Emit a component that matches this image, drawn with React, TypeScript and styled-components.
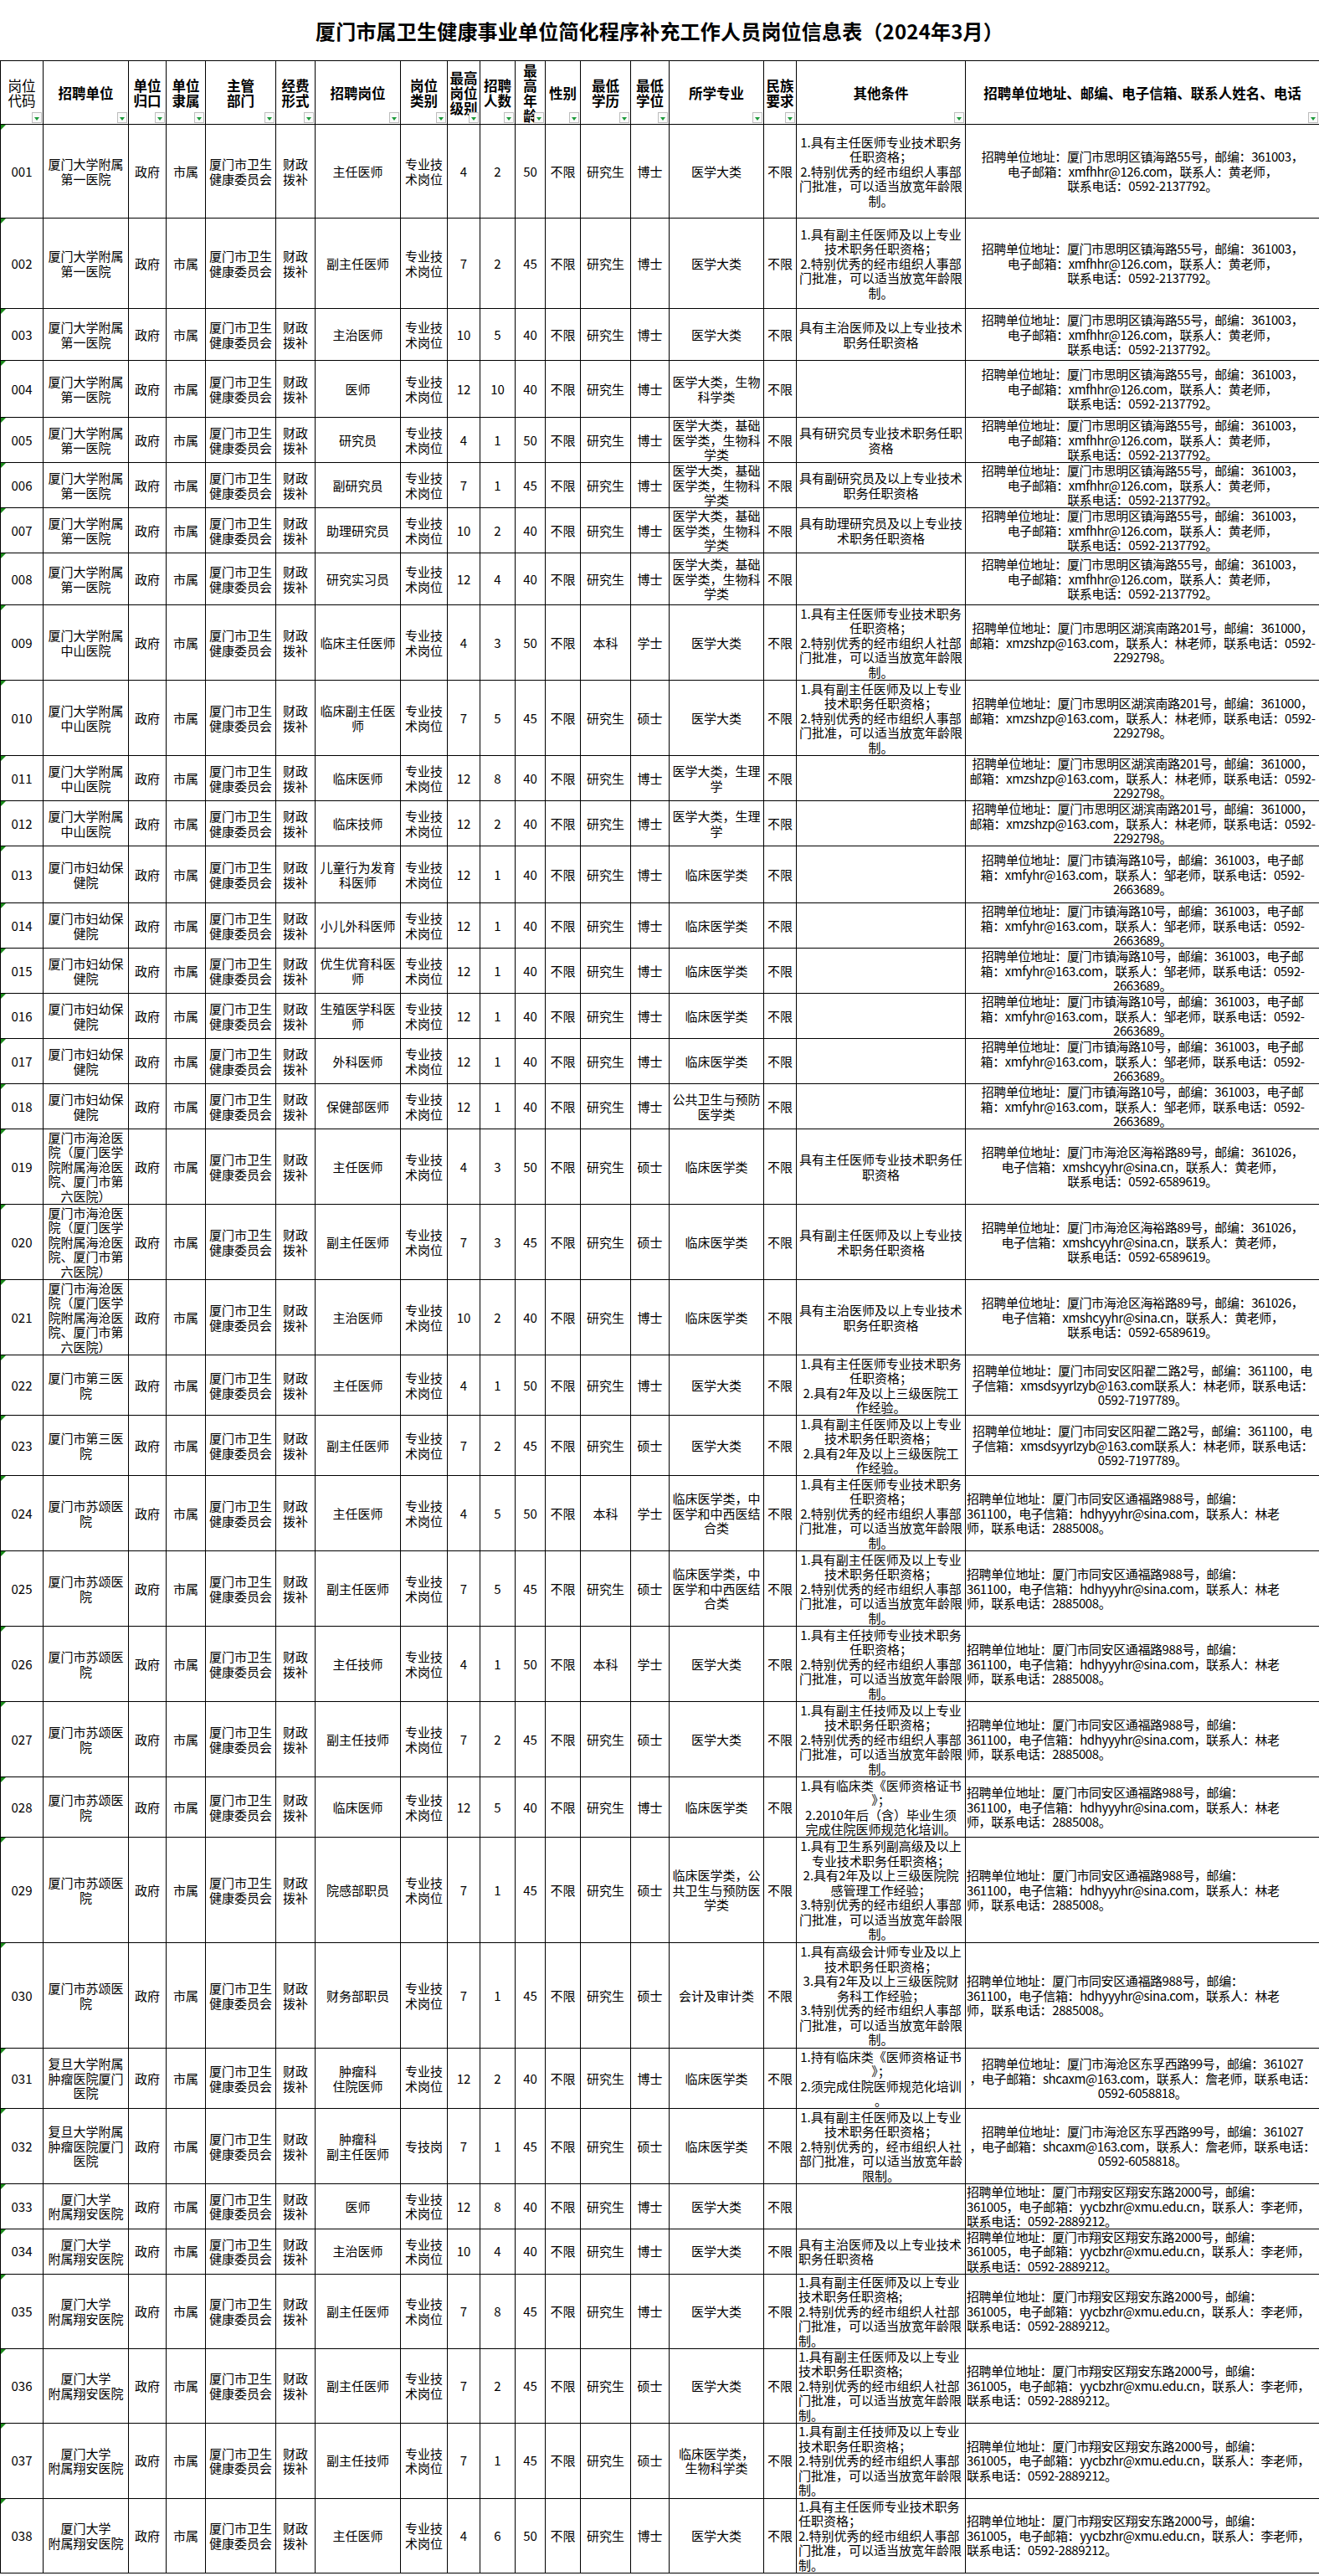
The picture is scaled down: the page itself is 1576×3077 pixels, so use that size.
import React from 'react';
import styled, { createGlobalStyle } from 'styled-components';

const GlobalStyle = createGlobalStyle`
  html, body {
    margin: 0;
    padding: 0;
    background: #fff;
  }
  body {
    font-family: "Noto Sans CJK SC", "Liberation Sans", sans-serif;
    color: #000;
  }
`;

const Page = styled.div`
  width: 1576px;
  min-height: 3077px;
  background: #fff;
`;

const Title = styled.h1`
  margin: 0;
  height: 72px;
  display: flex;
  align-items: center;
  justify-content: center;
  font-size: 24px;
  font-weight: 700;
  letter-spacing: 0.2px;
`;

const Sheet = styled.table`
  table-layout: fixed;
  border-collapse: collapse;
  width: 1576px;
`;

const Row = styled.tr<{ $h: number }>`
  height: ${({ $h }) => $h}px;
`;

const HeadCell = styled.th<{ $plain?: boolean }>`
  position: relative;
  border: 1px solid #000;
  padding: 0 1px;
  font-size: 16.5px;
  font-weight: ${({ $plain }) => ($plain ? 400 : 700)};
  line-height: 18px;
  white-space: pre-line;
  text-align: center;
  vertical-align: middle;
`;

const FilterBtn = styled.span`
  position: absolute;
  right: 1px;
  bottom: 1px;
  width: 12px;
  height: 13px;
  box-sizing: border-box;
  border: 1px solid #bdbdbd;
  background: #fafafa;
  &::after {
    content: '';
    position: absolute;
    left: 2px;
    top: 5px;
    border-left: 3px solid transparent;
    border-right: 3px solid transparent;
    border-top: 4px solid #1c9a3a;
  }
`;

const Cell = styled.td<{ $left?: boolean; $pre?: boolean }>`
  border: 1px solid #000;
  padding: 0 2px;
  font-size: 15px;
  line-height: 17.5px;
  text-align: ${({ $left }) => ($left ? 'left' : 'center')};
  vertical-align: middle;
  white-space: ${({ $pre }) => ($pre ? 'pre' : 'pre-line')};
  line-break: anywhere;
  overflow-wrap: anywhere;
`;

// the sheet's original font has narrower latin glyphs, so tighten the long address lines
const AddrCell = styled(Cell)`
  padding: 0 1px;
  letter-spacing: -0.4px;
`;

const CodeCell = styled(Cell)`
  position: relative;
  &::before {
    content: '';
    position: absolute;
    left: 0;
    top: 0;
    border-top: 6px solid #1a8a1a;
    border-right: 6px solid transparent;
  }
`;

const widths = [51, 102, 45, 47, 84, 47, 102, 56, 39, 42, 36, 42, 60, 46, 113, 39, 202, 423];

const headers = [
  '岗位\n代码', '招聘单位', '单位\n归口', '单位\n隶属', '主管\n部门', '经费\n形式', '招聘岗位', '岗位\n类别',
  '最高\n岗位\n级别', '招聘\n人数', '最\n高\n年\n龄', '性别', '最低\n学历', '最低\n学位', '所学专业', '民族\n要求',
  '其他条件', '招聘单位地址、邮编、电子信箱、联系人姓名、电话',
];

const C_ZR = '1.具有主任医师专业技术职务\n任职资格；\n2.特别优秀的经市组织人事部\n门批准，可以适当放宽年龄限\n制。';
const C_FZR = '1.具有副主任医师及以上专业\n技术职务任职资格；\n2.特别优秀的经市组织人事部\n门批准，可以适当放宽年龄限\n制。';
const C_ZZ = '具有主治医师及以上专业技术\n职务任职资格';
const C_XA_FZR = '1.具有副主任医师及以上专业\n技术职务任职资格;\n2.特别优秀的经市组织人社部\n门批准，可以适当放宽年龄限\n制。';

type Hospital = { unit: string; addr: string; left?: boolean };

const H1: Hospital = {
  unit: '厦门大学附属第一医院',
  addr: '招聘单位地址：厦门市思明区镇海路55号，邮编：361003，\n电子邮箱：xmfhhr@126.com，联系人：黄老师，\n联系电话：0592-2137792。',
};
const H2: Hospital = {
  unit: '厦门大学附属中山医院',
  addr: '招聘单位地址：厦门市思明区湖滨南路201号，邮编：361000，\n邮箱：xmzshzp@163.com，联系人：林老师，联系电话：0592-\n2292798。',
};
const H3: Hospital = {
  unit: '厦门市妇幼保健院',
  addr: '招聘单位地址：厦门市镇海路10号，邮编：361003，电子邮\n箱：xmfyhr@163.com，联系人：邹老师，联系电话：0592-\n2663689。',
};
const H4: Hospital = {
  unit: '厦门市海沧医院（厦门医学院附属海沧医院、厦门市第六医院）',
  addr: '招聘单位地址：厦门市海沧区海裕路89号，邮编：361026，\n电子信箱：xmshcyyhr@sina.cn，联系人：黄老师，\n联系电话：0592-6589619。',
};
const H5: Hospital = {
  unit: '厦门市第三医院',
  addr: '招聘单位地址：厦门市同安区阳翟二路2号，邮编：361100，电\n子信箱：xmsdsyyrlzyb@163.com联系人：林老师，联系电话：\n0592-7197789。',
};
const H6: Hospital = {
  unit: '厦门市苏颂医院',
  addr: '招聘单位地址：厦门市同安区通福路988号，邮编：\n361100，电子信箱：hdhyyyhr@sina.com，联系人：林老\n师，联系电话：2885008。',
  left: true,
};
const H7: Hospital = {
  unit: '复旦大学附属肿瘤医院厦门医院',
  addr: '招聘单位地址：厦门市海沧区东孚西路99号，邮编：361027\n，电子邮箱：shcaxm@163.com，联系人：詹老师，联系电话：\n0592-6058818。',
};
const H8: Hospital = {
  unit: '厦门大学\n附属翔安医院',
  addr: '招聘单位地址：厦门市翔安区翔安东路2000号，邮编：\n361005，电子邮箱：yycbzhr@xmu.edu.cn，联系人：李老师，\n联系电话：0592-2889212。',
  left: true,
};

type Post = {
  code: string;
  h: number;
  hos: Hospital;
  post: string;
  type?: string;
  level: number;
  num: number;
  age: number;
  edu: string;
  degree: string;
  major: string;
  cond: string;
  condLeft?: boolean;
};

const p = (
  code: string, h: number, hos: Hospital, post: string, level: number, num: number, age: number,
  edu: string, degree: string, major: string, cond = '', extra: Partial<Post> = {},
): Post => ({ code, h, hos, post, level, num, age, edu, degree, major, cond, ...extra });

const M5 = '医学大类，基础医学类，生物科学类';

const posts: Post[] = [
  p('001', 112, H1, '主任医师', 4, 2, 50, '研究生', '博士', '医学大类', C_ZR),
  p('002', 108, H1, '副主任医师', 7, 2, 45, '研究生', '博士', '医学大类', C_FZR),
  p('003', 62, H1, '主治医师', 10, 5, 40, '研究生', '博士', '医学大类', C_ZZ),
  p('004', 68, H1, '医师', 12, 10, 40, '研究生', '博士', '医学大类，生物科学类'),
  p('005', 54, H1, '研究员', 4, 1, 50, '研究生', '博士', M5, '具有研究员专业技术职务任职\n资格'),
  p('006', 54, H1, '副研究员', 7, 1, 45, '研究生', '博士', M5, '具有副研究员及以上专业技术\n职务任职资格'),
  p('007', 54, H1, '助理研究员', 10, 2, 40, '研究生', '博士', M5, '具有助理研究员及以上专业技\n术职务任职资格'),
  p('008', 62, H1, '研究实习员', 12, 4, 40, '研究生', '博士', M5),
  p('009', 90, H2, '临床主任医师', 4, 3, 50, '本科', '学士', '医学大类',
    '1.具有主任医师专业技术职务\n任职资格；\n2.特别优秀的经市组织人社部\n门批准，可以适当放宽年龄限\n制。'),
  p('010', 90, H2, '临床副主任医师', 7, 5, 45, '研究生', '硕士', '医学大类', C_FZR),
  p('011', 54, H2, '临床医师', 12, 8, 40, '研究生', '博士', '医学大类，生理学'),
  p('012', 54, H2, '临床技师', 12, 2, 40, '研究生', '博士', '医学大类，生理学'),
  p('013', 68, H3, '儿童行为发育科医师', 12, 1, 40, '研究生', '博士', '临床医学类'),
  p('014', 54, H3, '小儿外科医师', 12, 1, 40, '研究生', '博士', '临床医学类'),
  p('015', 54, H3, '优生优育科医师', 12, 1, 40, '研究生', '博士', '临床医学类'),
  p('016', 54, H3, '生殖医学科医师', 12, 1, 40, '研究生', '博士', '临床医学类'),
  p('017', 54, H3, '外科医师', 12, 1, 40, '研究生', '博士', '临床医学类'),
  p('018', 54, H3, '保健部医师', 12, 1, 40, '研究生', '博士', '公共卫生与预防医学类'),
  p('019', 90, H4, '主任医师', 4, 3, 50, '研究生', '硕士', '临床医学类', '具有主任医师专业技术职务任\n职资格'),
  p('020', 90, H4, '副主任医师', 7, 3, 45, '研究生', '硕士', '临床医学类', '具有副主任医师及以上专业技\n术职务任职资格'),
  p('021', 90, H4, '主治医师', 10, 2, 40, '研究生', '博士', '临床医学类', C_ZZ),
  p('022', 72, H5, '主任医师', 4, 1, 50, '研究生', '博士', '医学大类',
    '1.具有主任医师专业技术职务\n任职资格；\n2.具有2年及以上三级医院工\n作经验。'),
  p('023', 72, H5, '副主任医师', 7, 2, 45, '研究生', '硕士', '医学大类',
    '1.具有副主任医师及以上专业\n技术职务任职资格；\n2.具有2年及以上三级医院工\n作经验。'),
  p('024', 90, H6, '主任医师', 4, 5, 50, '本科', '学士', '临床医学类，中医学和中西医结合类', C_ZR),
  p('025', 90, H6, '副主任医师', 7, 5, 45, '研究生', '硕士', '临床医学类，中医学和中西医结合类', C_FZR),
  p('026', 90, H6, '主任技师', 4, 1, 50, '本科', '学士', '医学大类',
    '1.具有主任技师专业技术职务\n任职资格；\n2.特别优秀的经市组织人事部\n门批准，可以适当放宽年龄限\n制。'),
  p('027', 90, H6, '副主任技师', 7, 2, 45, '研究生', '硕士', '医学大类',
    '1.具有副主任技师及以上专业\n技术职务任职资格；\n2.特别优秀的经市组织人事部\n门批准，可以适当放宽年龄限\n制。'),
  p('028', 72, H6, '临床医师', 12, 5, 40, '研究生', '博士', '临床医学类',
    '1.具有临床类《医师资格证书\n》；\n2.2010年后（含）毕业生须\n完成住院医师规范化培训。'),
  p('029', 126, H6, '院感部职员', 7, 1, 45, '研究生', '硕士', '临床医学类，公共卫生与预防医学类',
    '1.具有卫生系列副高级及以上\n专业技术职务任职资格；\n2.具有2年及以上三级医院院\n感管理工作经验；\n3.特别优秀的经市组织人事部\n门批准，可以适当放宽年龄限\n制。'),
  p('030', 126, H6, '财务部职员', 7, 1, 45, '研究生', '硕士', '会计及审计类',
    '1.具有高级会计师专业及以上\n技术职务任职资格；\n3.具有2年及以上三级医院财\n务科工作经验；\n3.特别优秀的经市组织人事部\n门批准，可以适当放宽年龄限\n制。'),
  p('031', 72, H7, '肿瘤科\n住院医师', 12, 2, 40, '研究生', '博士', '临床医学类',
    '1.持有临床类《医师资格证书\n》；\n2.须完成住院医师规范化培训\n。'),
  p('032', 90, H7, '肿瘤科\n副主任医师', 7, 1, 45, '研究生', '硕士', '临床医学类',
    '1.具有副主任医师及以上专业\n技术职务任职资格；\n2.特别优秀的，经市组织人社\n部门批准，可以适当放宽年龄\n限制。', { type: '专技岗' }),
  p('033', 53, H8, '医师', 12, 8, 40, '研究生', '博士', '医学大类'),
  p('034', 54, H8, '主治医师', 10, 4, 40, '研究生', '博士', '医学大类', C_ZZ, { condLeft: true }),
  p('035', 89, H8, '副主任医师', 7, 8, 45, '研究生', '博士', '医学大类', C_XA_FZR, { condLeft: true }),
  p('036', 89, H8, '副主任医师', 7, 2, 45, '研究生', '硕士', '医学大类', C_XA_FZR, { condLeft: true }),
  p('037', 90, H8, '副主任技师', 7, 1, 45, '研究生', '硕士', '临床医学类，\n生物科学类',
    '1.具有副主任技师及以上专业\n技术职务任职资格；\n2.特别优秀的经市组织人事部\n门批准，可以适当放宽年龄限\n制。', { condLeft: true }),
  p('038', 89, H8, '主任医师', 4, 6, 50, '研究生', '博士', '医学大类',
    '1.具有主任医师专业技术职务\n任职资格；\n2.特别优秀的经市组织人事部\n门批准，可以适当放宽年龄限\n制。', { condLeft: true }),
];

const PostRow = ({ item }: { item: Post }) => (
  <Row $h={item.h}>
    <CodeCell>{item.code}</CodeCell>
    <Cell>{item.hos.unit}</Cell>
    <Cell>政府</Cell>
    <Cell>市属</Cell>
    <Cell>厦门市卫生健康委员会</Cell>
    <Cell>财政拨补</Cell>
    <Cell>{item.post}</Cell>
    <Cell>{item.type ?? '专业技术岗位'}</Cell>
    <Cell>{item.level}</Cell>
    <Cell>{item.num}</Cell>
    <Cell>{item.age}</Cell>
    <Cell>不限</Cell>
    <Cell>{item.edu}</Cell>
    <Cell>{item.degree}</Cell>
    <Cell>{item.major}</Cell>
    <Cell>不限</Cell>
    <Cell $pre $left={item.condLeft}>{item.cond}</Cell>
    <AddrCell $pre $left={item.hos.left}>{item.hos.addr}</AddrCell>
  </Row>
);

const App = () => {
  return (
    <Page>
      <GlobalStyle />
      <Title>厦门市属卫生健康事业单位简化程序补充工作人员岗位信息表（2024年3月）</Title>
      <Sheet>
        <colgroup>
          {widths.map((w, i) => (
            <col key={i} style={{ width: w }} />
          ))}
        </colgroup>
        <thead>
          <Row $h={76}>
            {headers.map((h, i) => (
              <HeadCell key={i} $plain={i === 0}>
                {h}
                <FilterBtn />
              </HeadCell>
            ))}
          </Row>
        </thead>
        <tbody>
          {posts.map((item) => (
            <PostRow key={item.code} item={item} />
          ))}
        </tbody>
      </Sheet>
    </Page>
  );
};

export default App;
